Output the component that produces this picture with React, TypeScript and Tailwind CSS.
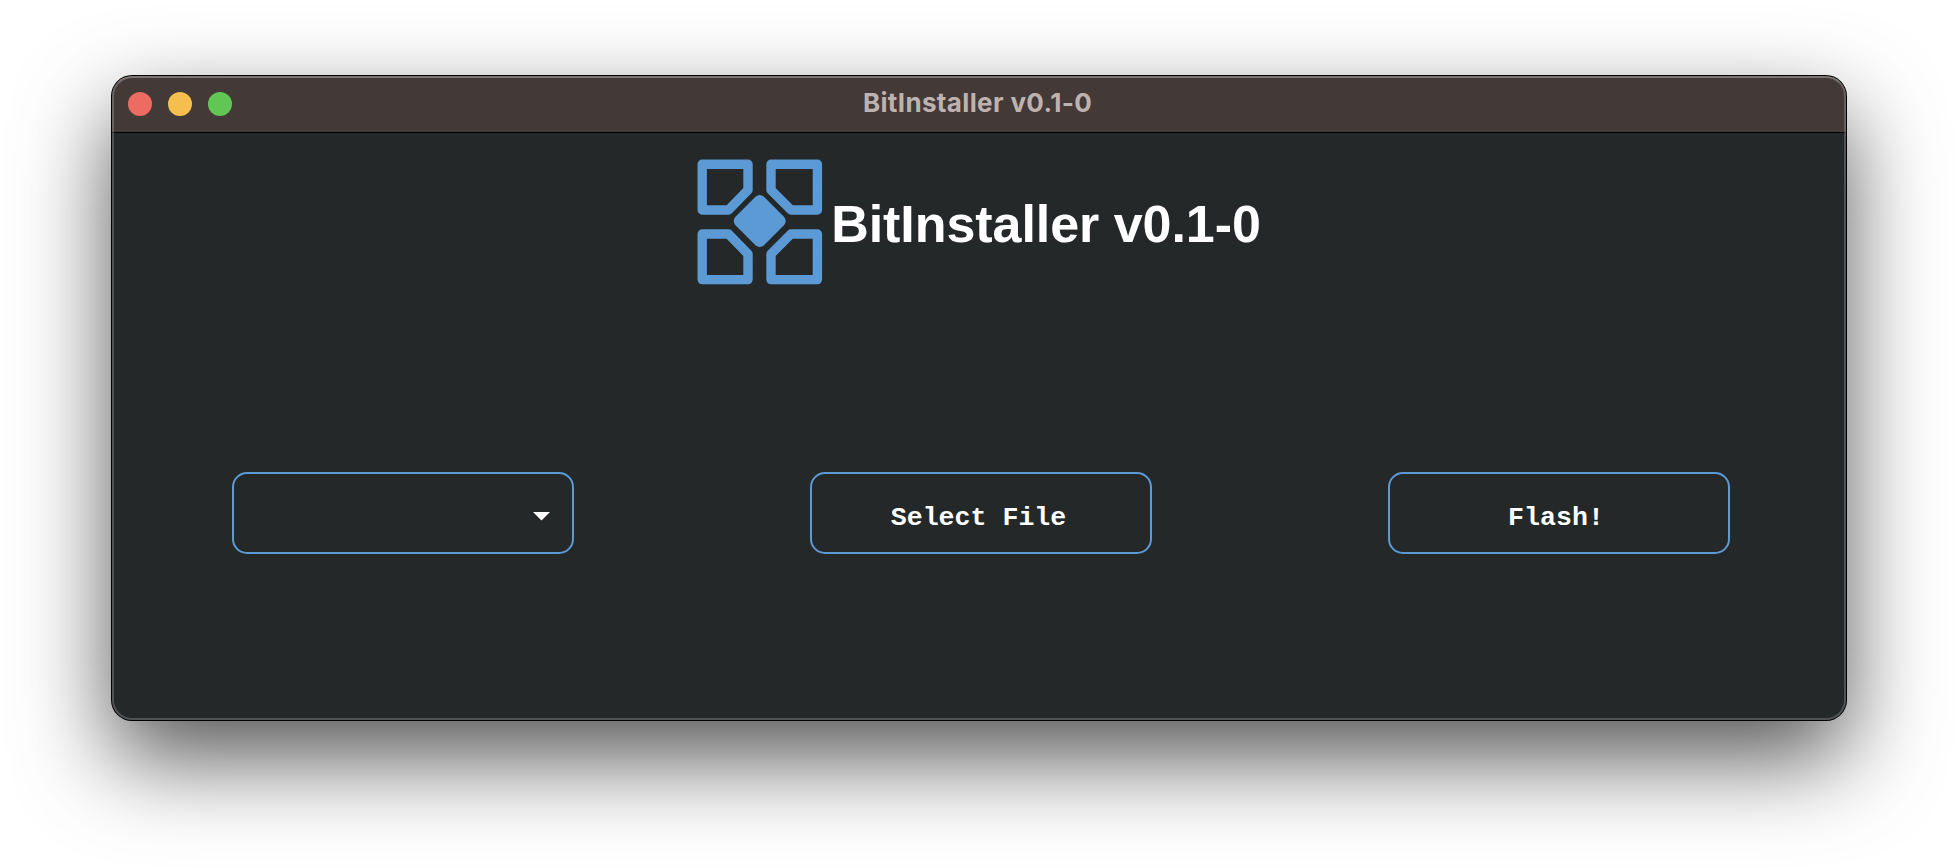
import React from "react";

function Logo() {
  return (
    <svg width="126" height="126" viewBox="0 0 126 126" className="shrink-0">
      <g fill="none" stroke="#5b9ad5" strokeWidth="9.4" strokeLinejoin="round">
        <path d="M5.2 5.2H51V31L31.5 51H5.2Z" />
        <path d="M120.4 5.2H74V31L94 51H120.4Z" />
        <path d="M5.2 120.6H51V95L31.5 75H5.2Z" />
        <path d="M120.4 120.6H74V95L94 75H120.4Z" />
      </g>
      <path d="M62.7 42L82.7 62L62.7 82L42.7 62Z" fill="#5b9ad5" stroke="#5b9ad5" strokeWidth="12" strokeLinejoin="round" />
    </svg>
  );
}

const control =
  "ml-[120px] flex h-[82px] w-[342px] items-center rounded-[15px] border-2 border-[#5b9ad5] font-['Liberation_Mono',monospace] text-[26.6px] font-bold text-white";

export default function App() {
  return (
    <div className="h-[868px] w-[1958px] overflow-hidden bg-white px-28 pt-[76px] font-['Liberation_Sans',sans-serif]">
      <main className="relative flex h-[644px] w-[1734px] flex-col rounded-[20px] bg-[#242829] shadow-[0_0_0_1px_#000,0_38px_92px_rgba(0,0,0,0.67)]">
        <header className="grid h-[57px] shrink-0 grid-cols-[1fr_auto_1fr] items-center rounded-t-[20px] border-b border-black bg-[#433937]">
          <div className="flex gap-4 pl-4">
            <span className="size-6 rounded-full bg-[#ed6b60]" />
            <span className="size-6 rounded-full bg-[#f5bf4f]" />
            <span className="size-6 rounded-full bg-[#62c655]" />
          </div>
          <span className="pr-[3px] pb-0.5 font-['Inter',sans-serif] text-[26px] leading-none font-bold tracking-[0.35px] text-[#beb2b0]">BitInstaller v0.1-0</span>
        </header>
        <section className="flex h-[178px] items-center justify-center gap-2">
          <Logo />
          <h1 className="pt-1 text-[52px] leading-none font-bold tracking-[-0.05px] whitespace-nowrap text-white">BitInstaller v0.1-0</h1>
        </section>
        <section className="mt-[161px] grid grid-cols-3">
          <button className={control + " justify-end pt-[6px] pr-[22px]"} aria-label="Device">
            <svg width="17" height="9" viewBox="0 0 17 9"><path d="M0 0H17L8.5 8.6Z" fill="#fff" /></svg>
          </button>
          <button className={control + " justify-center pt-[11px] pr-[5px]"}>Select File</button>
          <button className={control + " justify-center pt-[11px] pr-[6px]"}>Flash!</button>
        </section>
        <div className="pointer-events-none absolute inset-0 rounded-[20px] border-2 border-t-white/30 border-r-white/20 border-b-white/20 border-l-white/20" />
      </main>
    </div>
  );
}
